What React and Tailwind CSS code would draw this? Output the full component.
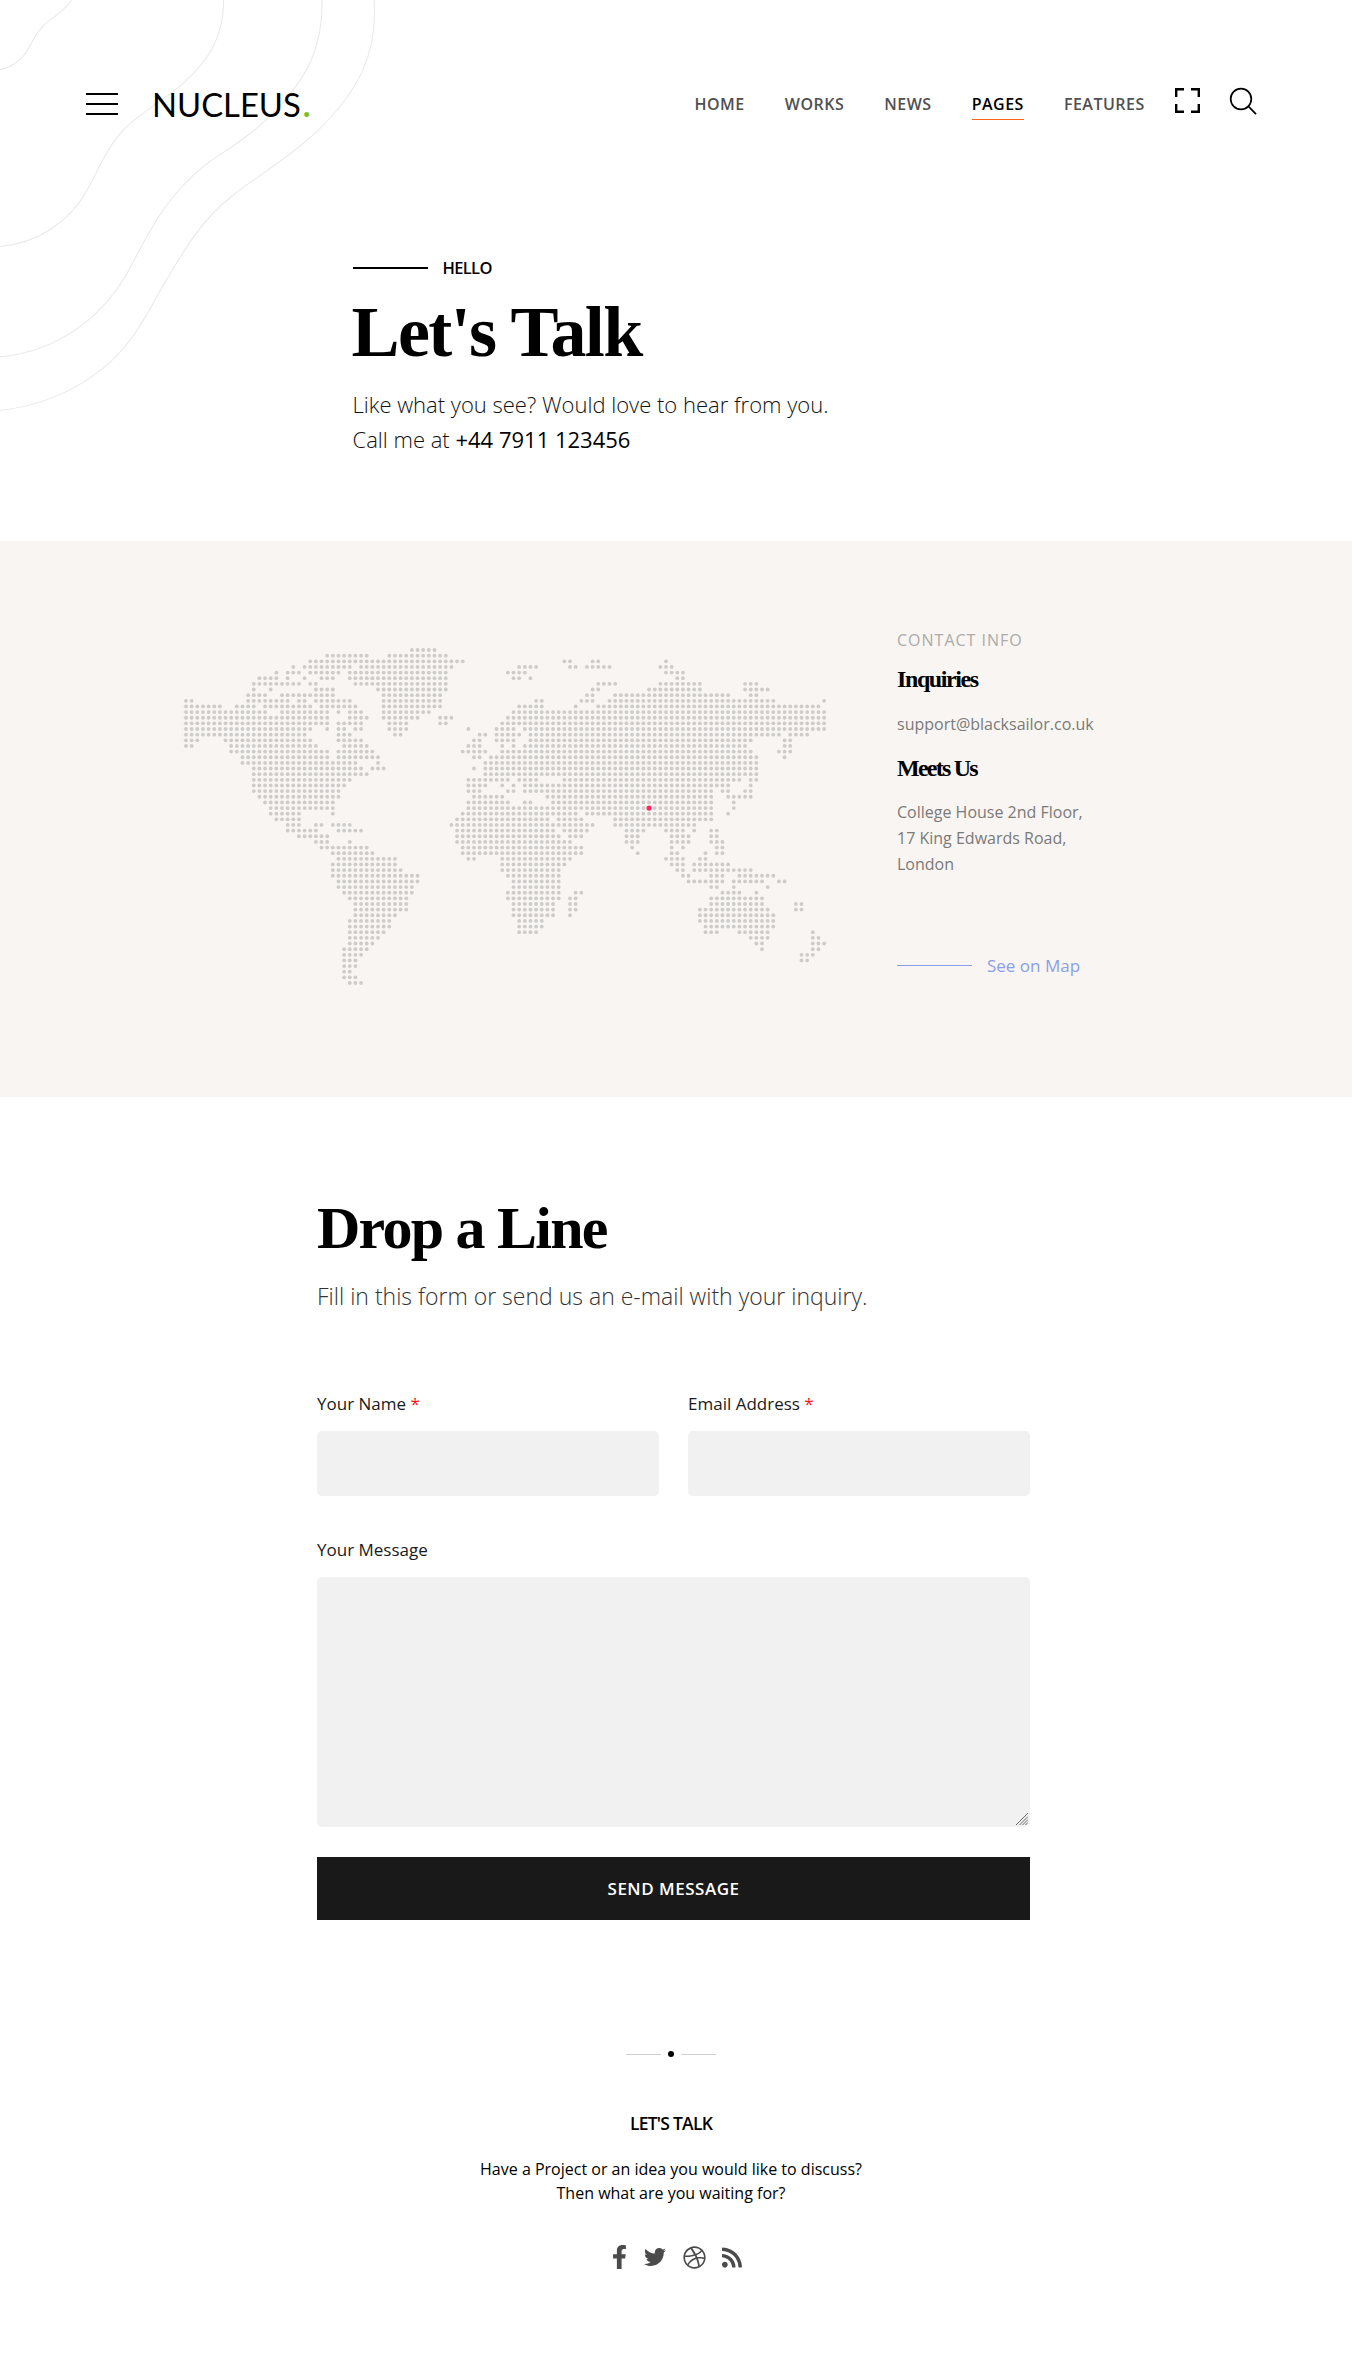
import { FaFacebookF, FaTwitter, FaDribbble, FaRss } from 'react-icons/fa';

const NAV = ['HOME', 'WORKS', 'NEWS', 'PAGES', 'FEATURES'];

// Land dots of the world map: one line per row, each entry a column or a column range.
const MAP_ROWS = `40-44
25-32 36-46
22-49 67-68 72-73 85
19 21-29 31-47 59-62 68-69 71-75 84-86
16 18-20 22-27 29-46 57-60 85-88
13-16 18 21 24-26 29-46 58-59 61 87-88
12-20 22-23 30-46 73-76 84-91 99-101
12 15 23-26 34-46 72-73 82-91 99-103
11-14 17-26 35-45 71-72 76-96 100-101
0-1 11-18 20-21 23-29 35-45 62-63 70-72 75-104 113
-1-6 9-12 14-22 24-30 35-45 59-63 69 73-112
-1-14 17-25 27 29-31 35-43 58-113
-1-25 29-32 35-41 45-47 57-113
-1-25 27-31 36-39 45-46 56-113
-1-22 25 27-28 30-31 36-39 50 55-58 60-113
-1-21 27-29 37-38 52-53 55-59 61-105 107-110
-1-2 7-22 27-31 51-52 55-58 61-100 106-107
0-1 8-23 28-32 50-52 56 58 60-99 106-107
-1 8-25 27-33 49-53 56-100 105-107
10-25 27-34 51-52 54-101 106
10-30 34 53-101
12-31 33-35 51 53-101
12-32 53-101
12-29 50-57 59-62 67-98 100-101
12-28 50-53 56 58 60-96 100
12-27 50-52 57-58 60-93 95-96 99-100
13-27 51-56 64-93 96-100
14-26 50-57 60-61 65-93 97
15-26 50-93 97
15-20 26 49-69 71-93 96
16-20 48-64 66-70 76-93
18-20 23-24 26-29 47-72 76-90
18-23 27-31 48-65 67-71 78-81 85-88 90 93-94
20-25 48-66 68-70 78-80 86-89 93-94
23-25 29 48-68 78-80 86-89 93-95
24-32 49-70 79 86 88 94-95
26-33 49-70 80 86-87 92 94-95
27-37 50-51 56-68 85-88 91-92
26-37 56-67 86-88 90-96
26-38 56-66 87-88 90-100
26-41 57-66 88-89 93-95 98-104
27-41 58-66 89-95 97-102 105-106
27-40 58-66 93-94 97 103
28-40 57-66 69-70 95-98 101
29-39 57-66 68-69 93-102
30-39 58-65 68-69 93-102 108-109
30-39 58-65 68-69 91-103 108-109
30-37 58-65 68 91-104
29-36 59-63 91-104
29-36 59-63 92-104
29-35 59-62 92-94 98-103 111
29-34 100-103 111-112
29-33 101-102 111-113
28-32 102 111-112
28-31 109-111
28-30 109-110
28-30
28-29
28-30
29-31`.split('\n');

const DOTS = MAP_ROWS.flatMap((line, row) =>
  line.split(' ').flatMap((part) => {
    const [, a, b] = part.match(/^(-?\d+)(?:-(\d+))?$/);
    const start = Number(a);
    const end = b === undefined ? start : Number(b);
    return Array.from({ length: end - start + 1 }, (_, i) => [start + i, row]);
  })
);

const px = (col) => 4 + col * 5.647;
const py = (row) => 2 + row * 5.644;

function WorldMap() {
  return (
    <svg className="mt-[107px] h-[338px] w-[647px] shrink-0" viewBox="0 0 647 338">
      {DOTS.map(([c, r]) => (
        <circle key={`${c}.${r}`} cx={px(c)} cy={py(r)} r="1.9" fill="#cecccb" />
      ))}
      <circle cx={px(82)} cy={py(28)} r="2.6" fill="#ff2a5f" />
    </svg>
  );
}

function Contours() {
  return (
    <svg
      className="pointer-events-none absolute left-0 top-0 h-[415px] w-[380px]"
      viewBox="0 0 1140 1245"
      fill="none"
      stroke="#e9e9e9"
      strokeWidth="3.2"
    >
      <path d="M218-4C190 35 165 48 148 62C110 90 100 120 86 145C66 182 35 202-5 210" />
      <path d="M671-5C672 110 630 190 510 282C455 320 410 350 370 390C320 442 293 515 260 573C205 670 110 730-5 740" />
      <path d="M966-5C970 130 930 235 800 358C730 425 660 460 610 500C510 580 460 670 400 785C320 945 180 1055-5 1071" />
      <path d="M1122-5C1135 160 1075 275 950 395C860 480 760 535 700 585C600 660 540 770 470 890C450 930 430 960 410 992C330 1115 180 1215-5 1231" />
    </svg>
  );
}

function Header() {
  return (
    <header className="relative flex h-[124px] items-center pl-[86px] pt-[84px]">
      <button className="flex w-8 flex-col gap-2" aria-label="Menu">
        <span className="h-0.5 bg-black" />
        <span className="h-0.5 bg-black" />
        <span className="h-0.5 bg-black" />
      </button>
      <a className="ml-[34px] mt-0.5 w-[542.5px] whitespace-nowrap font-['Lato',sans-serif] text-[32.8px] leading-10 text-black">
        NUCLEUS<span className="ml-0.5 font-bold text-[#7cc124]">.</span>
      </a>
      <nav className="flex gap-10 text-base font-semibold leading-6 tracking-[0.5px] text-[#505050]">
        {NAV.map((item) =>
          item === 'PAGES' ? (
            <a key={item} className="-mb-1 border-b border-[#f9651b] pb-[3px] text-black">{item}</a>
          ) : (
            <a key={item}>{item}</a>
          )
        )}
      </nav>
      <svg className="mb-[7px] ml-[30px] h-[25px] w-[25px]" viewBox="0 0 25 25" fill="none" stroke="#000" strokeWidth="2.4">
        <path d="M1.2 9V1.2H9M16 1.2h7.8V9M23.8 16v7.8H16M9 23.8H1.2V16" />
      </svg>
      <svg className="mb-[6px] ml-[29px] h-7 w-7" viewBox="0 0 28 28" fill="none" stroke="#000" strokeWidth="1.7">
        <circle cx="12" cy="12" r="10.3" />
        <path d="M19.2 19.2 27 27.2" />
      </svg>
    </header>
  );
}

export default function App() {
  return (
    <div className="relative min-h-[2353px] w-full overflow-hidden bg-white font-['Open_Sans',sans-serif] text-black">
      <Contours />
      <Header />

      <section className="relative mt-[132px] pl-[352.5px]">
        <div className="flex items-center gap-[15px] text-[16.5px] font-semibold leading-6 tracking-[-0.65px]">
          <span className="h-0.5 w-[75px] bg-black" />
          HELLO
        </div>
        <h1 className="-ml-px mt-3 font-['Liberation_Serif',serif] text-[72px] font-bold leading-[80px] tracking-[-1.6px]">
          Let's Talk
        </h1>
        <p className="mt-[15px] text-[22px] font-light leading-[35px] text-[#111]">
          Like what you see? Would love to hear from you.
          <br />
          Call me at <span className="font-normal text-black">+44 7911 123456</span>
        </p>
      </section>

      <section className="mt-[84px] flex h-[556px] gap-[68px] bg-[#f8f5f2] pl-[182px]">
        <WorldMap />
        <div className="pt-[87px] text-base leading-[26px] text-[#7b7a79]">
          <div className="leading-6 tracking-[1px] text-[#adaba9]">CONTACT INFO</div>
          <h4 className="mt-3 font-['Liberation_Serif',serif] text-2xl font-bold leading-[30px] tracking-[-1.4px] text-black">
            Inquiries
          </h4>
          <p className="mt-[17px]">support@blacksailor.co.uk</p>
          <h4 className="mt-4 font-['Liberation_Serif',serif] text-2xl font-bold leading-[30px] tracking-[-1.75px] text-black">
            Meets Us
          </h4>
          <p className="mt-4">
            College House 2nd Floor,
            <br />
            17 King Edwards Road,
            <br />
            London
          </p>
          <a className="mt-[77px] flex items-center gap-[15px] text-[17px] leading-6 text-[#8a9fe8]">
            <span className="mb-0.5 h-px w-[75px] bg-[#8a9fe8]" />
            See on Map
          </a>
        </div>
      </section>

      <section className="ml-[317px] w-[713px] pt-24">
        <h2 className="font-['Liberation_Serif',serif] text-[60px] font-bold leading-[70px] tracking-[-1.75px]">
          Drop a Line
        </h2>
        <p className="mt-4 text-[23px] font-light leading-[34px] text-[#333]">
          Fill in this form or send us an e-mail with your inquiry.
        </p>
        <form className="mt-[79px] text-[17px] leading-6 text-[#1a1a1a]">
          <div className="grid grid-cols-2 gap-[29px]">
            <label className="block">
              Your Name <span className="text-[#f11]">*</span>
              <input className="mt-[15px] block h-[65px] w-full rounded-[5px] bg-[#f1f1f1]" />
            </label>
            <label className="block">
              Email Address <span className="text-[#f11]">*</span>
              <input className="mt-[15px] block h-[65px] w-full rounded-[5px] bg-[#f1f1f1]" />
            </label>
          </div>
          <label className="relative mt-[42px] block">
            Your Message
            <textarea className="mt-[15px] block h-[250px] w-full resize-none rounded-[5px] bg-[#f1f1f1]" />
            <svg className="absolute bottom-0.5 right-0.5 h-3 w-3" viewBox="0 0 12 12" fill="none" stroke="#666" strokeWidth="1">
              <path d="M0 12 12 0M3.5 12 12 3.5M6.5 12 12 6.5M9.5 12 12 9.5" />
            </svg>
          </label>
          <button type="button" className="mt-[30px] block h-[63px] w-full bg-[#191919] font-semibold tracking-[0.5px] text-white">
            SEND MESSAGE
          </button>
        </form>
      </section>

      <footer className="mt-[131px] flex flex-col items-center pr-[10px] text-center">
        <div className="flex items-center gap-[7px]">
          <span className="h-px w-[35px] bg-[#cfcfcf]" />
          <span className="h-1.5 w-1.5 rounded-full bg-black" />
          <span className="h-px w-[35px] bg-[#cfcfcf]" />
        </div>
        <h5 className="mt-[54px] text-[17.5px] font-semibold leading-6 tracking-[-0.75px]">LET'S TALK</h5>
        <p className="mt-[22px] text-base leading-6">
          Have a Project or an idea you would like to discuss?
          <br />
          Then what are you waiting for?
        </p>
        <div className="mt-10 flex items-center pl-[12px] text-[#4b4b4b]">
          <FaFacebookF className="h-6 w-[15px]" />
          <FaTwitter className="ml-[17px] h-[22px] w-[22px]" />
          <FaDribbble className="ml-[17px] h-[23px] w-[23px]" />
          <FaRss className="ml-4 h-[23px] w-[20px]" />
        </div>
      </footer>
    </div>
  );
}
